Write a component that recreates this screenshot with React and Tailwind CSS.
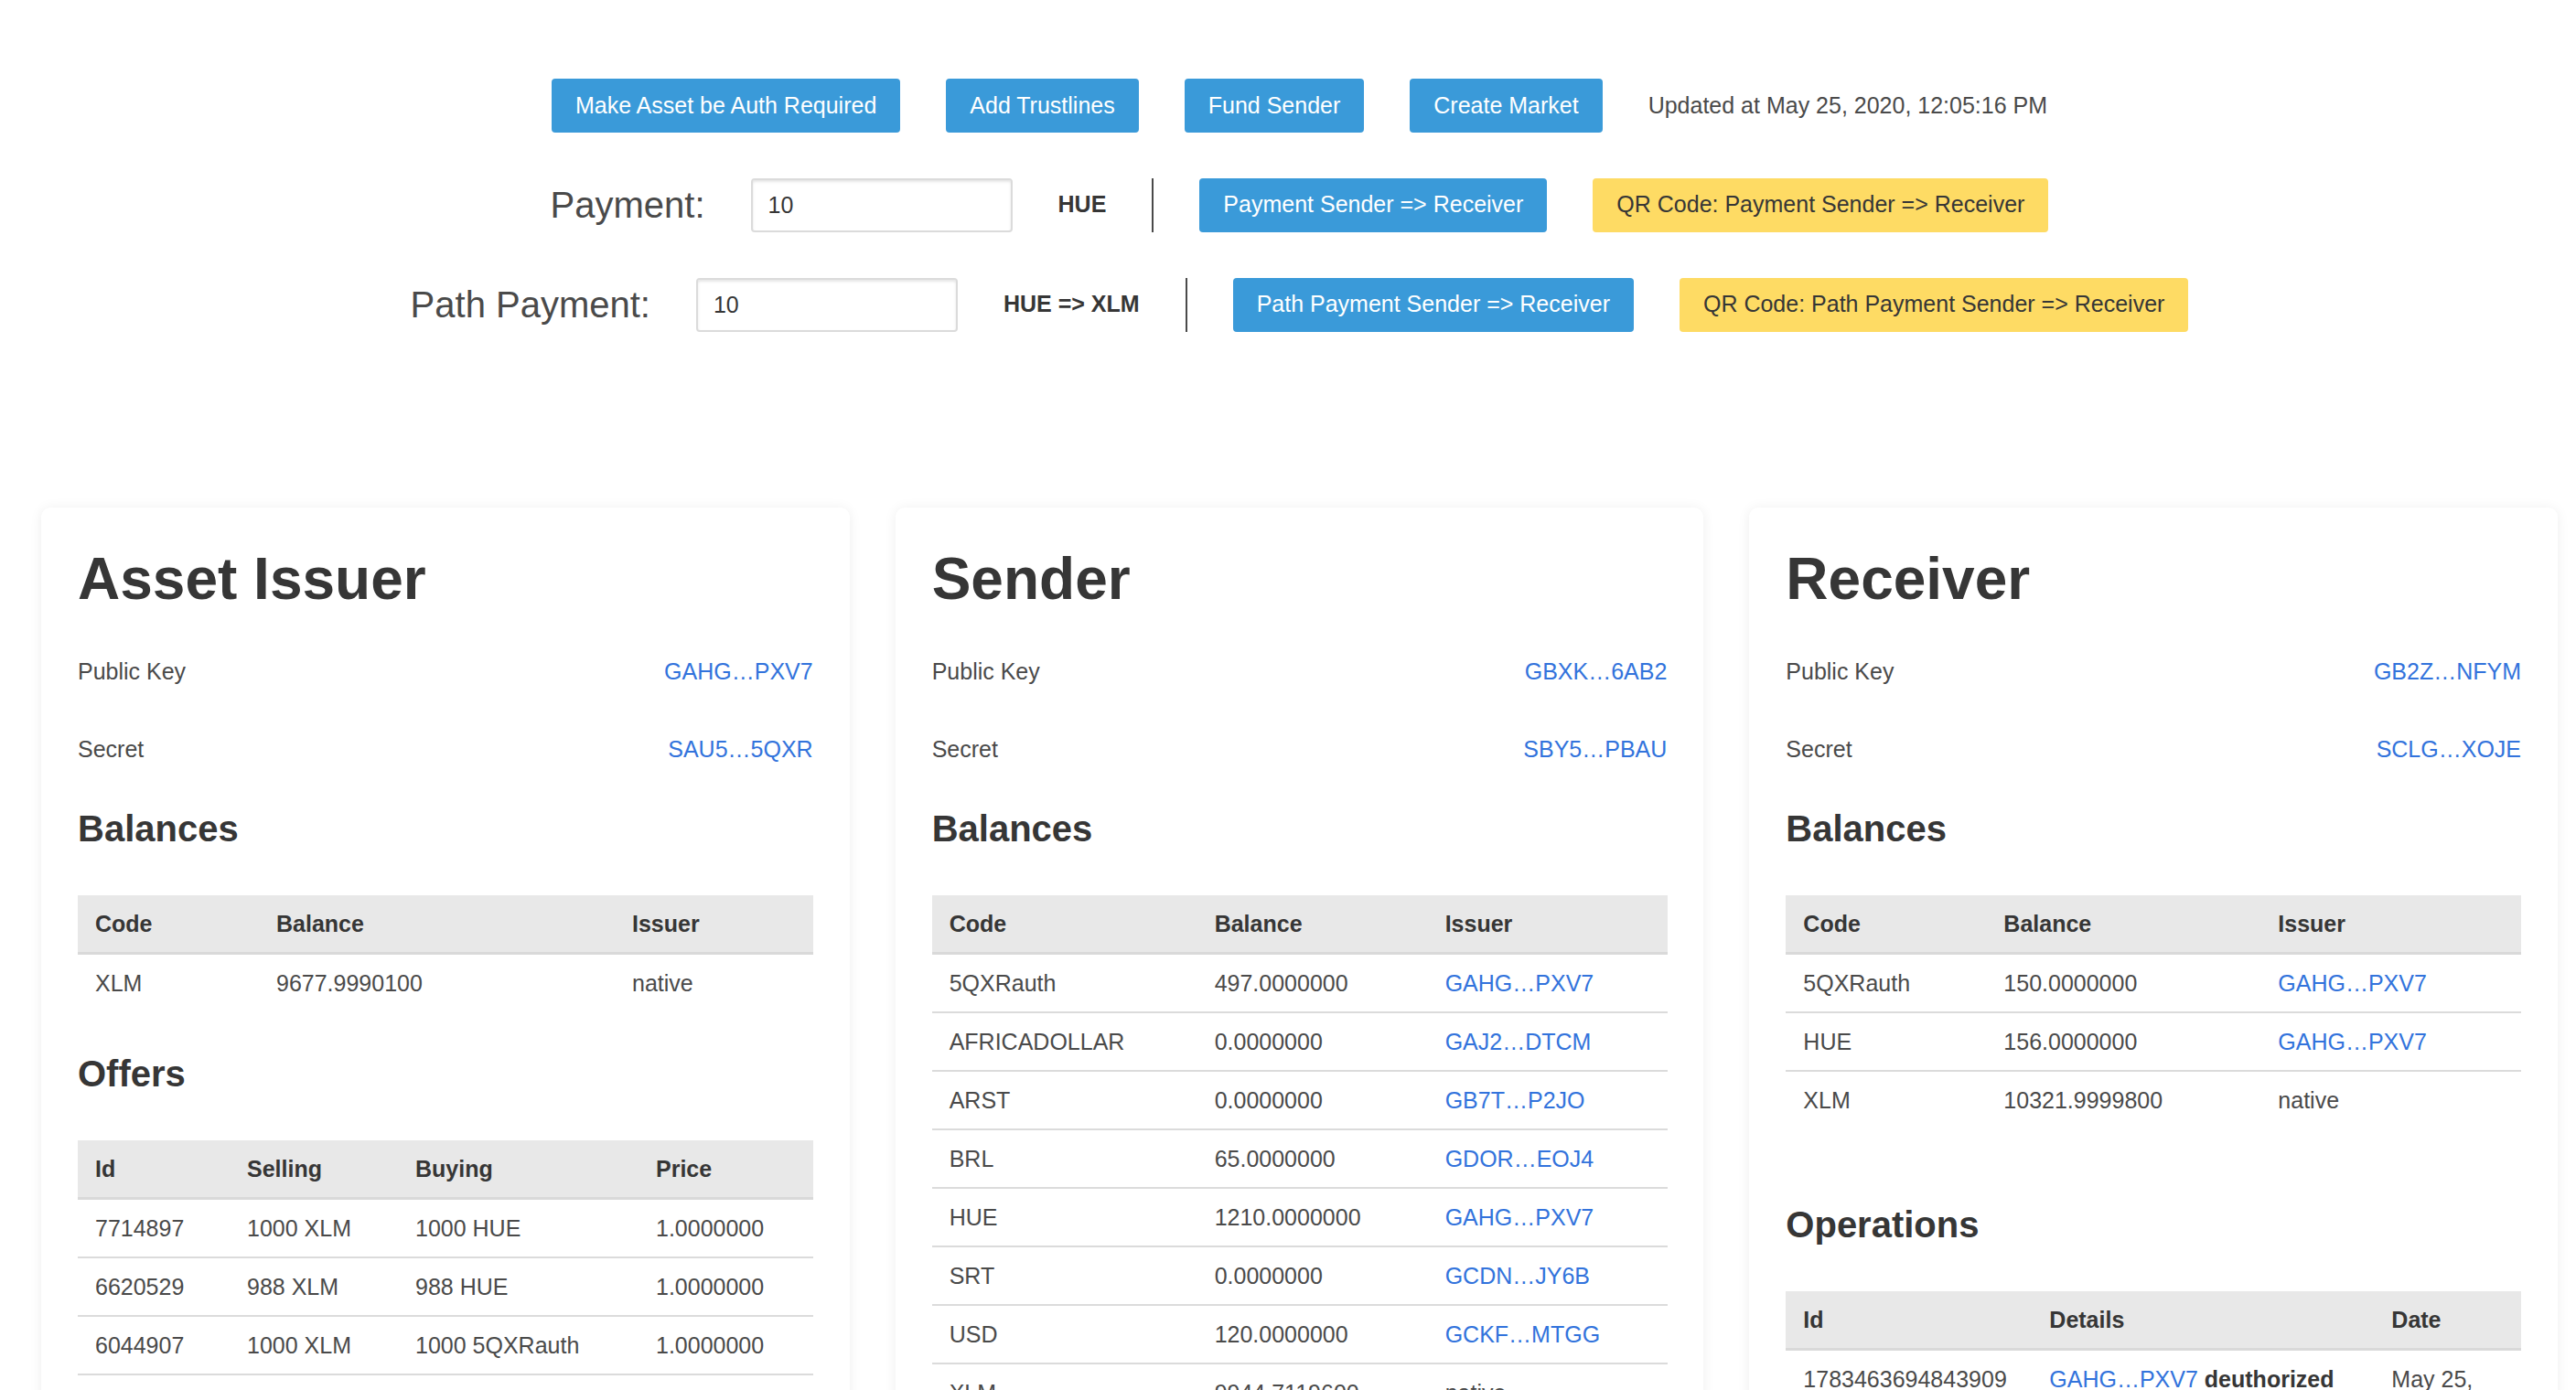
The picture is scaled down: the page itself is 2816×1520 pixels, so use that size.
import React from 'react';

const Btn = ({ children, yellow }) => (
    <button
        className={
            yellow
                ? 'h-[59px] px-[26px] rounded-[4px] bg-[#fedb64] text-[#363636] text-[25px] whitespace-nowrap'
                : 'h-[59px] px-[26px] rounded-[4px] bg-[#3a9ad9] text-white text-[25px] whitespace-nowrap'
        }
    >
        {children}
    </button>
);

const Link = ({ children }) => <a className="text-[#3273dc]">{children}</a>;

const Table = ({ cols, rows }) => (
    <table className="w-full table-fixed border-collapse text-[25px]">
        <thead>
            <tr>
                {cols.map((c) => (
                    <th
                        key={c.label}
                        style={{ width: c.w }}
                        className="bg-[#e8e8e8] border-b-[3px] border-[#d9d9d9] px-[19px] py-3 leading-[38px] text-left font-bold text-[#363636]"
                    >
                        {c.label}
                    </th>
                ))}
            </tr>
        </thead>
        <tbody>
            {rows.map((r, i) => (
                <tr key={i}>
                    {r.map((cell, j) => (
                        <td
                            key={j}
                            className={
                                i > 0
                                    ? 'border-t-2 border-[#dbdbdb] px-[19px] py-3 leading-[38px] align-top'
                                    : 'px-[19px] py-3 leading-[38px] align-top'
                            }
                        >
                            {cell}
                        </td>
                    ))}
                </tr>
            ))}
        </tbody>
    </table>
);

const Card = ({ title, pub, secret, children }) => (
    <div className="rounded-[10px] bg-white shadow-[0_1px_14px_rgba(0,0,0,0.07)] px-[40px] pt-[40px] pb-[40px]">
        <h1 className="text-[64px] font-bold leading-[1.2] text-[#363636]">{title}</h1>
        <div className="mt-[20px]">
            <div className="flex justify-between py-[24px] leading-[37.5px]">
                <span>Public Key</span>
                <Link>{pub}</Link>
            </div>
            <div className="flex justify-between py-[24px] leading-[37.5px]">
                <span>Secret</span>
                <Link>{secret}</Link>
            </div>
        </div>
        {children}
    </div>
);

const H2 = ({ children, extra }) => (
    <h2
        className={
            extra
                ? 'mt-[81px] mb-[49px] text-[40px] font-bold leading-[48px] text-[#363636]'
                : 'mt-[19px] mb-[49px] text-[40px] font-bold leading-[48px] text-[#363636]'
        }
    >
        {children}
    </h2>
);

export default function App() {
    const balanceCols = (a, b, c) => [
        { label: 'Code', w: a },
        { label: 'Balance', w: b },
        { label: 'Issuer', w: c },
    ];

    const senderRows = [
        ['5QXRauth', '497.0000000', <Link>GAHG…PXV7</Link>],
        ['AFRICADOLLAR', '0.0000000', <Link>GAJ2…DTCM</Link>],
        ['ARST', '0.0000000', <Link>GB7T…P2JO</Link>],
        ['BRL', '65.0000000', <Link>GDOR…EOJ4</Link>],
        ['HUE', '1210.0000000', <Link>GAHG…PXV7</Link>],
        ['SRT', '0.0000000', <Link>GCDN…JY6B</Link>],
        ['USD', '120.0000000', <Link>GCKF…MTGG</Link>],
        ['XLM', '9944.7119600', 'native'],
    ];

    return (
        <div className="min-h-screen bg-white font-['Liberation_Sans',Arial,sans-serif] text-[25px] text-[#4a4a4a] pl-[45px] pr-[20px] pt-[86px]">
            {/* Actions */}
            <div className="flex flex-col items-center gap-[49px]">
                <div className="flex items-center gap-[50px]">
                    <Btn>Make Asset be Auth Required</Btn>
                    <Btn>Add Trustlines</Btn>
                    <Btn>Fund Sender</Btn>
                    <Btn>Create Market</Btn>
                    <span>Updated at May 25, 2020, 12:05:16 PM</span>
                </div>
                <div className="flex items-center gap-[50px]">
                    <span className="text-[40px]">Payment:</span>
                    <input
                        defaultValue="10"
                        className="w-[286px] h-[59px] px-[17px] rounded-[4px] border-2 border-[#dbdbdb] shadow-[inset_0_2px_3px_rgba(10,10,10,0.1)] text-[25px] text-[#363636] outline-none"
                    />
                    <span className="font-bold text-[#363636]">HUE</span>
                    <div className="w-[2px] h-[59px] bg-[#4a4a4a]"></div>
                    <Btn>Payment Sender =&gt; Receiver</Btn>
                    <Btn yellow>QR Code: Payment Sender =&gt; Receiver</Btn>
                </div>
                <div className="flex items-center gap-[50px]">
                    <span className="text-[40px]">Path Payment:</span>
                    <input
                        defaultValue="10"
                        className="w-[286px] h-[59px] px-[17px] rounded-[4px] border-2 border-[#dbdbdb] shadow-[inset_0_2px_3px_rgba(10,10,10,0.1)] text-[25px] text-[#363636] outline-none"
                    />
                    <span className="font-bold text-[#363636]">HUE =&gt; XLM</span>
                    <div className="w-[2px] h-[59px] bg-[#4a4a4a]"></div>
                    <Btn>Path Payment Sender =&gt; Receiver</Btn>
                    <Btn yellow>QR Code: Path Payment Sender =&gt; Receiver</Btn>
                </div>
            </div>

            {/* Accounts */}
            <div className="mt-[192px] grid grid-cols-3 gap-[50px] items-start">
                <Card title="Asset Issuer" pub="GAHG…PXV7" secret="SAU5…5QXR">
                    <H2>Balances</H2>
                    <div className="mb-[44px]">
                        <Table cols={balanceCols(198, 389, 217)} rows={[['XLM', '9677.9990100', 'native']]} />
                    </div>
                    <H2>Offers</H2>
                    <Table
                        cols={[
                            { label: 'Id', w: 166 },
                            { label: 'Selling', w: 184 },
                            { label: 'Buying', w: 263 },
                            { label: 'Price', w: 191 },
                        ]}
                        rows={[
                            ['7714897', '1000 XLM', '1000 HUE', '1.0000000'],
                            ['6620529', '988 XLM', '988 HUE', '1.0000000'],
                            ['6044907', '1000 XLM', '1000 5QXRauth', '1.0000000'],
                            ['5921764', '500 XLM', '500 HUE', '1.0000000'],
                        ]}
                    />
                </Card>

                <Card title="Sender" pub="GBXK…6AB2" secret="SBY5…PBAU">
                    <H2>Balances</H2>
                    <div className="mb-[44px]">
                        <Table cols={balanceCols(290, 252, 262)} rows={senderRows} />
                    </div>
                </Card>

                <Card title="Receiver" pub="GB2Z…NFYM" secret="SCLG…XOJE">
                    <H2>Balances</H2>
                    <div className="mb-[44px]">
                        <Table
                            cols={balanceCols(219, 300, 285)}
                            rows={[
                                ['5QXRauth', '150.0000000', <Link>GAHG…PXV7</Link>],
                                ['HUE', '156.0000000', <Link>GAHG…PXV7</Link>],
                                ['XLM', '10321.9999800', 'native'],
                            ]}
                        />
                    </div>
                    <H2 extra>Operations</H2>
                    <Table
                        cols={[
                            { label: 'Id', w: 269 },
                            { label: 'Details', w: 374 },
                            { label: 'Date', w: 161 },
                        ]}
                        rows={[
                            [
                                '1783463694843909',
                                <span>
                                    <Link>GAHG…PXV7</Link> <b className="text-[#363636]">deuthorized</b>{' '}
                                    <Link>GB2Z…NFYM</Link> for 5QXRauth
                                </span>,
                                'May 25, 2020, 12:04:51 PM',
                            ],
                        ]}
                    />
                </Card>
            </div>
        </div>
    );
}
